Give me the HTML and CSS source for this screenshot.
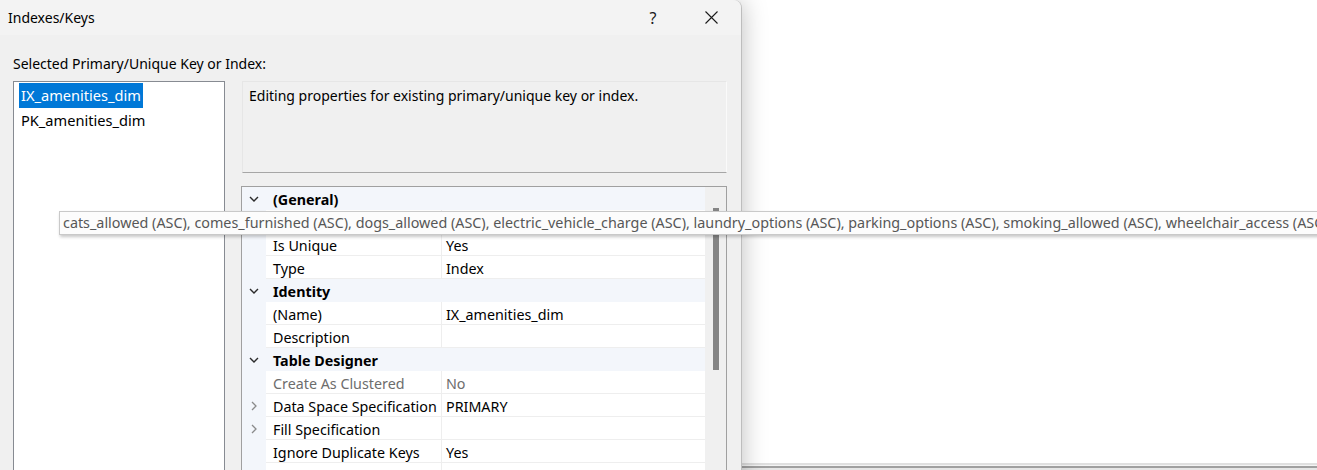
FILE: index.html
```html
<!DOCTYPE html>
<html>
<head>
<meta charset="utf-8">
<title>Indexes/Keys</title>
<link rel="stylesheet" href="styles.css">
</head>
<body>
<div class="screen">
  <div class="dialog">
    <div class="titlebar">
      <span class="title">Indexes/Keys</span>
      <div class="controls">
        <span class="ctl help">?</span>
        <span class="ctl close"><svg width="13" height="13" viewBox="0 0 13 13"><path d="M0.5 0.5 L12.5 12.5 M12.5 0.5 L0.5 12.5" stroke="#1a1a1a" stroke-width="1.1" fill="none"/></svg></span>
      </div>
    </div>
    <div class="content">
      <div class="label">Selected Primary/Unique Key or Index:</div>
      <div class="main">
        <div class="keylist">
          <div class="item selected">IX_amenities_dim</div>
          <div class="item">PK_amenities_dim</div>
        </div>
        <div class="rightcol">
          <div class="desc">Editing properties for existing primary/unique key or index.</div>
          <div class="grid">
            <div class="rows">
              <div class="row cat"><span class="gut"><svg class="chev-down" width="10" height="6" viewBox="0 0 10 6"><path d="M1 1 L5 5 L9 1" stroke="#2b2b2b" stroke-width="1.4" fill="none"/></svg></span><span class="catname">(General)</span></div>
              <div class="row prop"><span class="gut"></span><span class="name"></span><span class="val"></span></div>
              <div class="row prop"><span class="gut"></span><span class="name">Is Unique</span><span class="val">Yes</span></div>
              <div class="row prop"><span class="gut"></span><span class="name">Type</span><span class="val">Index</span></div>
              <div class="row cat"><span class="gut"><svg class="chev-down" width="10" height="6" viewBox="0 0 10 6"><path d="M1 1 L5 5 L9 1" stroke="#2b2b2b" stroke-width="1.4" fill="none"/></svg></span><span class="catname">Identity</span></div>
              <div class="row prop"><span class="gut"></span><span class="name">(Name)</span><span class="val">IX_amenities_dim</span></div>
              <div class="row prop"><span class="gut"></span><span class="name">Description</span><span class="val"></span></div>
              <div class="row cat"><span class="gut"><svg class="chev-down" width="10" height="6" viewBox="0 0 10 6"><path d="M1 1 L5 5 L9 1" stroke="#2b2b2b" stroke-width="1.4" fill="none"/></svg></span><span class="catname">Table Designer</span></div>
              <div class="row prop disabled"><span class="gut"></span><span class="name">Create As Clustered</span><span class="val">No</span></div>
              <div class="row prop"><span class="gut"><svg class="chev-right" width="6" height="10" viewBox="0 0 6 10"><path d="M1 1 L5 5 L1 9" stroke="#8a8a8a" stroke-width="1.3" fill="none"/></svg></span><span class="name">Data Space Specification</span><span class="val">PRIMARY</span></div>
              <div class="row prop"><span class="gut"><svg class="chev-right" width="6" height="10" viewBox="0 0 6 10"><path d="M1 1 L5 5 L1 9" stroke="#8a8a8a" stroke-width="1.3" fill="none"/></svg></span><span class="name">Fill Specification</span><span class="val"></span></div>
              <div class="row prop"><span class="gut"></span><span class="name">Ignore Duplicate Keys</span><span class="val">Yes</span></div>
              <div class="row prop"><span class="gut"></span><span class="name"></span><span class="val"></span></div>
            </div>
            <div class="vscroll"><div class="thumb"></div></div>
          </div>
        </div>
      </div>
    </div>
  </div>
  <div class="backdrop"><div class="bottomlines"></div></div>
  <div class="tooltip">cats_allowed (ASC), comes_furnished (ASC), dogs_allowed (ASC), electric_vehicle_charge (ASC), laundry_options (ASC), parking_options (ASC), smoking_allowed (ASC), wheelchair_access (ASC)</div>
</div>
</body>
</html>
```
FILE: styles.css
```css
html, body {
  margin: 0;
  padding: 0;
}
body {
  width: 1317px;
  height: 470px;
  overflow: hidden;
  background: #ffffff;
  font-family: "Noto Sans", "Open Sans", sans-serif;
  font-size: 14px;
  color: #000;
}
.screen {
  position: relative;
  display: flex;
  width: 1317px;
  height: 470px;
  overflow: hidden;
}
.dialog {
  position: relative;
  z-index: 1;
  box-sizing: border-box;
  flex: 0 0 742px;
  height: 540px;
  background: #f0f0f0;
  border-right: 1px solid #bdbdbd;
  border-top-right-radius: 8px;
  box-shadow: 0 0 26px rgba(0, 0, 0, 0.26);
}
.titlebar {
  height: 35px;
  display: flex;
  align-items: center;
  background: #f3f3f3;
  border-top-right-radius: 8px;
}
.title {
  padding-left: 8px;
  font-size: 14px;
}
.controls {
  margin-left: auto;
  display: flex;
  gap: 12px;
  padding-right: 7px;
}
.ctl {
  width: 46px;
  height: 35px;
  display: flex;
  align-items: center;
  justify-content: center;
}
.help {
  font-size: 16px;
  color: #1a1a1a;
}
.content {
  padding: 19px 14px 0 13px;
}
.label {
  line-height: 20px;
  height: 20px;
}
.main {
  display: flex;
  margin-top: 7px;
}
.keylist {
  box-sizing: border-box;
  width: 212px;
  height: 420px;
  background: #fff;
  border: 1px solid #878b92;
  padding-top: 1px;
}
.item {
  width: fit-content;
  margin-left: 5px;
  padding: 0 2px;
  height: 25px;
  line-height: 24px;
  font-size: 14.6px;
}
.item.selected {
  background: #0078d7;
  color: #fff;
}
.rightcol {
  margin-left: 16px;
  flex: 1;
  display: flex;
  flex-direction: column;
}
.desc {
  box-sizing: border-box;
  margin-left: 1px;
  height: 92px;
  padding: 4px 6px;
  line-height: 20px;
  border: 1px solid #e6e6e6;
  border-bottom-color: #a6a6a6;
  border-right-color: #fafafa;
}
.grid {
  margin-top: 13px;
  display: flex;
  border: 1px solid #a0a0a0;
  height: 320px;
  background: #fff;
  font-size: 14.3px;
}
.rows {
  width: 463px;
  flex: 0 0 463px;
}
.row {
  display: grid;
  grid-template-columns: 24px 176px 1fr;
  height: 23px;
  box-sizing: border-box;
  line-height: 22px;
}
.row.cat {
  background: #f3f6fb;
  font-weight: bold;
}
.row.prop {
  border-bottom: 1px solid #eeeeee;
}
.gut {
  background: #f3f6fb;
  display: flex;
  align-items: center;
  justify-content: center;
}
.row.prop .gut {
  margin-bottom: -1px;
}
.chev-down {
  margin-left: -1px;
}
.chev-right {
  margin-left: -1px;
}
.catname {
  grid-column: 2 / 4;
  padding: 2px 0 0 7px;
  line-height: 21px;
}
.name {
  padding: 2px 0 0 7px;
  line-height: 21px;
  border-right: 1px solid #eeeeee;
  white-space: nowrap;
  overflow: hidden;
}
.val {
  padding: 2px 0 0 4px;
  line-height: 21px;
  white-space: nowrap;
  overflow: hidden;
}
.row.disabled .name,
.row.disabled .val {
  color: #6d6d6d;
}
.vscroll {
  flex: 1;
  background: #f0f0f0;
  border-left: 1px solid #f0f0f0;
}
.thumb {
  margin: 21px 0 0 7px;
  width: 6px;
  height: 162px;
  background: #858585;
}
.backdrop {
  flex: 1;
  display: flex;
  flex-direction: column;
  justify-content: flex-end;
}
.bottomlines {
  height: 7px;
  background: linear-gradient(#e0e0e0 0 2px, #f4f4f4 2px 3px, #a0a0a0 3px 5px, #e6e6e6 5px);
}
.tooltip {
  position: absolute;
  z-index: 5;
  left: 59px;
  top: 211px;
  box-sizing: border-box;
  height: 24px;
  padding: 0 3px;
  line-height: 22px;
  white-space: nowrap;
  background: #fcfcfc;
  border: 1px solid #c9c9c9;
  box-shadow: 1px 2px 3px rgba(0, 0, 0, 0.22);
  color: #575757;
  font-size: 14.35px;
}
```
